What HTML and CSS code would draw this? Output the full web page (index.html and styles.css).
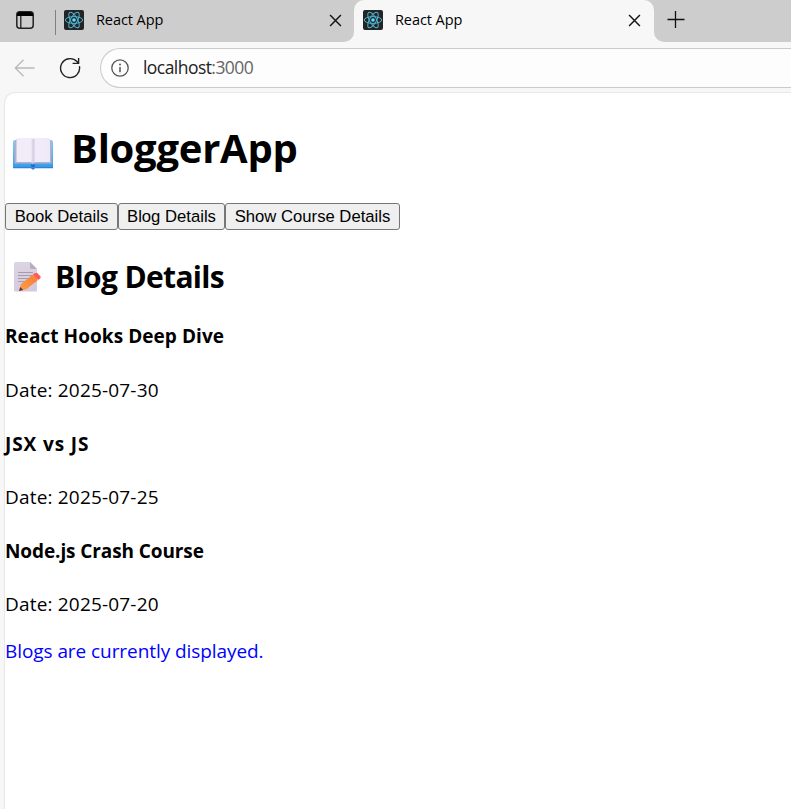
FILE: index.html
```html
<!DOCTYPE html>
<html lang="en">
<head>
<meta charset="utf-8">
<title>React App</title>
<link rel="stylesheet" href="styles.css">
</head>
<body>
<svg class="defs" aria-hidden="true">
  <symbol id="react" viewBox="0 0 20 20">
    <rect width="20" height="20" rx="2" fill="#222426"/>
    <g fill="none" stroke="#4fb3cf" stroke-width="1">
      <ellipse cx="10" cy="10" rx="8.7" ry="3.4"/>
      <ellipse cx="10" cy="10" rx="8.7" ry="3.4" transform="rotate(60 10 10)"/>
      <ellipse cx="10" cy="10" rx="8.7" ry="3.4" transform="rotate(120 10 10)"/>
    </g>
    <circle cx="10" cy="10" r="1.8" fill="#61dafb"/>
  </symbol>
  <symbol id="close" viewBox="0 0 12 12">
    <path d="M1 1 11 11M11 1 1 11" fill="none" stroke="#151515" stroke-width="1.35"/>
  </symbol>
</svg>
<header class="tabs">
  <div class="side">
    <svg class="layout-icon" width="18" height="18" viewBox="0 0 18 18">
      <rect x=".8" y=".8" width="16.4" height="16.4" rx="3" fill="none" stroke="#222" stroke-width="1.5"/>
      <path d="M1 5V4q0-3 3-3h10q3 0 3 3v1z" fill="#000"/>
      <path d="M4.8 5v12" stroke="#222" stroke-width="1.3"/>
    </svg>
    <span class="divider"></span>
  </div>
  <div class="tab before">
    <svg class="favicon"><use href="#react"/></svg>
    <span class="tab-title">React App</span>
    <svg class="close"><use href="#close"/></svg>
  </div>
  <div class="tab active">
    <svg class="favicon"><use href="#react"/></svg>
    <span class="tab-title">React App</span>
    <svg class="close"><use href="#close"/></svg>
  </div>
  <div class="after">
    <svg width="18" height="18" viewBox="0 0 18 18"><path d="M.5 9.5h17M8.5 1v17" stroke="#111" stroke-width="1.3"/></svg>
  </div>
</header>
<nav class="toolbar">
  <svg class="back" width="21" height="18" viewBox="0 0 21 18"><path d="M20.500 9H1.300M9.500.8 1.300 9l8.200 8.200" fill="none" stroke="#b9b9b9" stroke-width="1.3"/></svg>
  <svg class="reload" width="22" height="22" viewBox="0 0 22 22"><path d="M20.400 9.200A9.500 9.500 0 1 1 18 4.600L19.500 6.200M19.600 1v5.400h-6" fill="none" stroke="#222" stroke-width="1.4"/></svg>
  <div class="address">
    <svg width="18" height="18" viewBox="0 0 18 18"><circle cx="9" cy="9" r="8.200" fill="none" stroke="#555" stroke-width="1.3"/><path d="M9 8v5.200" stroke="#555" stroke-width="1.500"/><circle cx="9" cy="5.500" r="1" fill="#555"/></svg>
    <span class="url">localhost<span class="port">:3000</span></span>
  </div>
</nav>
<main class="page">
  <h1>
    <svg class="book" width="40" height="33" viewBox="0 0 40 33">
      <defs>
        <linearGradient id="cover" x2="0" y2="1"><stop stop-color="#78d5f7"/><stop offset=".8" stop-color="#36a8ee"/><stop offset="1" stop-color="#3b8fe4"/></linearGradient>
        <linearGradient id="paper"><stop stop-color="#f1ecf7"/><stop offset=".43" stop-color="#f2ecfa"/><stop offset=".5" stop-color="#d5cadf"/><stop offset=".57" stop-color="#f2ecfa"/><stop offset="1" stop-color="#eee8f7"/></linearGradient>
      </defs>
      <path d="M0 5q0-2 2-2h36q2 0 2 2v26H22l-2 1.500-2-1.500H0z" fill="url(#cover)"/>
      <path d="M0 30.300h18l2 1.200 2-1.200h18v.9H22L20 32.800l-2-1.600H0z" fill="#3675d4"/>
      <path d="M1.500 4 4 2v23h14l2 2 2-2h14V2l2.500 2v22.500H22l-2 1.500-2-1.500H1.500z" fill="#b9acc8"/>
      <path d="M3.500 3q0-2 2-2H17q2.500 0 3 1 .5-1 3-1h12q2 0 2 2v22H23q-2 0-3 1.500Q19 25 17 25H3.500z" fill="url(#paper)"/>
      <path d="M18 27.500h4v1.500l-2 1.500-2-1.500z" fill="#2765bd"/>
    </svg>
    <span>BloggerApp</span>
  </h1>
  <div class="actions"><button class="b1">Book Details</button><button class="b2">Blog Details</button><button class="b3">Show Course Details</button></div>
  <h2>
    <svg class="memo" width="27" height="31" viewBox="0 0 27 31">
      <defs>
        <linearGradient id="sheet" x2=".2" y2="1"><stop stop-color="#dcd5e2"/><stop offset="1" stop-color="#d5c9e1"/></linearGradient>
        <linearGradient id="pencil" y1="1" x2="1" y2="0"><stop stop-color="#ffa048"/><stop offset="1" stop-color="#f47b30"/></linearGradient>
      </defs>
      <path d="M0 2.500Q0 1 1.500 1H16l7 7v21.500q0 1-1 1H1.500Q0 30.500 0 29z" fill="url(#sheet)"/>
      <path d="M16 1v5.500Q16 8 17.500 8H23z" fill="#b8adbf"/>
      <path d="M4 11.500h15M4 14.500h15M4 17.500h13M4 20.500h9" stroke="#a49daa" stroke-width="1"/>
      <path d="m5 30 2-7L19 13.500l5 5.500L12 28.500z" fill="url(#pencil)"/>
      <path d="m19 13.500 2-1.300q1.500-.9 2.700.3l2.600 2.800q1 1.200-.2 2.300L24.200 19z" fill="#ff5b52"/>
      <path d="m5 30 1.200-4.100 3.100 3.100z" fill="#583b49"/>
      <path d="m17.500 14.700 5 5.500" stroke="#ff8960" stroke-width="1"/>
    </svg>
    <span>Blog Details</span>
  </h2>
  <h4 class="t1">React Hooks Deep Dive</h4>
  <p>Date: 2025-07-30</p>
  <h4 class="t2">JSX vs JS</h4>
  <p>Date: 2025-07-25</p>
  <h4 class="t3">Node.js Crash Course</h4>
  <p>Date: 2025-07-20</p>
  <p class="status">Blogs are currently displayed.</p>
</main>
</body>
</html>
```
FILE: styles.css
```css
* { box-sizing: border-box; }
body {
  margin: 0;
  height: 809px;
  overflow: hidden;
  display: flex;
  flex-direction: column;
  background: #f7f7f7;
  color: #000;
  font-family: "Open Sans", "Noto Sans", sans-serif;
}
svg { display: block; flex: none; }
.defs { display: none; }
.tabs { display: flex; height: 42px; flex: none; background: linear-gradient(#cdcdcd 20px, #f7f7f7 20px); }
.side, .before, .after { background: #cdcdcd; }
.side { width: 56px; display: flex; align-items: center; padding: 0 0 2px 16px; }
.divider { width: 1px; height: 25px; margin: 4px 0 0 21px; background: #808080; }
.tab { display: flex; align-items: center; padding-bottom: 2px; }
.before { width: 298px; padding-left: 8px; padding-right: 12px; border-bottom-right-radius: 10px; }
.active {
  width: 300px;
  padding-left: 9px;
  padding-right: 13px;
  background: #f7f7f7;
  border-radius: 10px 10px 0 0;
}
.favicon { width: 20px; height: 20px; }
.tab-title { margin-left: 12px; padding-bottom: 2px; flex: 1; font-size: 14.500px; letter-spacing: -.08px; }
.close { width: 13px; height: 13px; }
.after { flex: 1; border-bottom-left-radius: 10px; padding: 10px 0 0 13px; }
.toolbar { height: 50px; flex: none; display: flex; align-items: center; padding: 2px 0 0 14px; }
.reload { margin-left: 24px; }
.address {
  flex: 1;
  height: 40px;
  margin-left: 19px;
  padding-left: 10px;
  display: flex;
  align-items: center;
  border: 1px solid #cacaca;
  border-right: 0;
  border-radius: 20px 0 0 20px;
  background: #fdfdfd;
}
.url { margin-left: 14px; padding-bottom: 2px; font-size: 17.500px; letter-spacing: -.55px; color: #222; }
.port { color: #666; }
.page {
  flex: 1;
  margin-left: 4px;
  border: 1px solid #e8e8e8;
  border-width: 1px 0 0 1px;
  border-top-left-radius: 11px;
  background: #fff;
}
h1, h2, h4, p { margin: 0; white-space: nowrap; }
h1 { display: flex; height: 54px; margin-top: 28px; font-size: 40px; line-height: 54px; letter-spacing: -.25px; }
.book { margin: 16px 18px 0 8px; }
.actions { display: flex; margin-top: 28px; }
button {
  height: 27px;
  padding: 0;
  border: 1px solid #767676;
  border-radius: 3px;
  background: #efefef;
  color: #000;
  font: 16.670px "Liberation Sans", sans-serif;
}
.b1 { width: 113px; }
.b2 { width: 107px; }
.b3 { width: 175px; }
h2 { display: flex; height: 40px; margin-top: 27px; font-size: 30px; line-height: 40px; letter-spacing: -.65px; }
.memo { margin: 4px 14px 0 9px; }
h4, p { height: 27px; font-size: 19px; line-height: 27px; }
h4 { margin-top: 27px; }
p { margin-top: 26px; letter-spacing: .18px; }
.t1 { margin-top: 26px; letter-spacing: .06px; }
.t2 { letter-spacing: .9px; }
.t3 { letter-spacing: -.1px; }
.t1 + p { margin-top: 27px; }
.status { margin-top: 20px; letter-spacing: -.07px; color: #00f; }
```
